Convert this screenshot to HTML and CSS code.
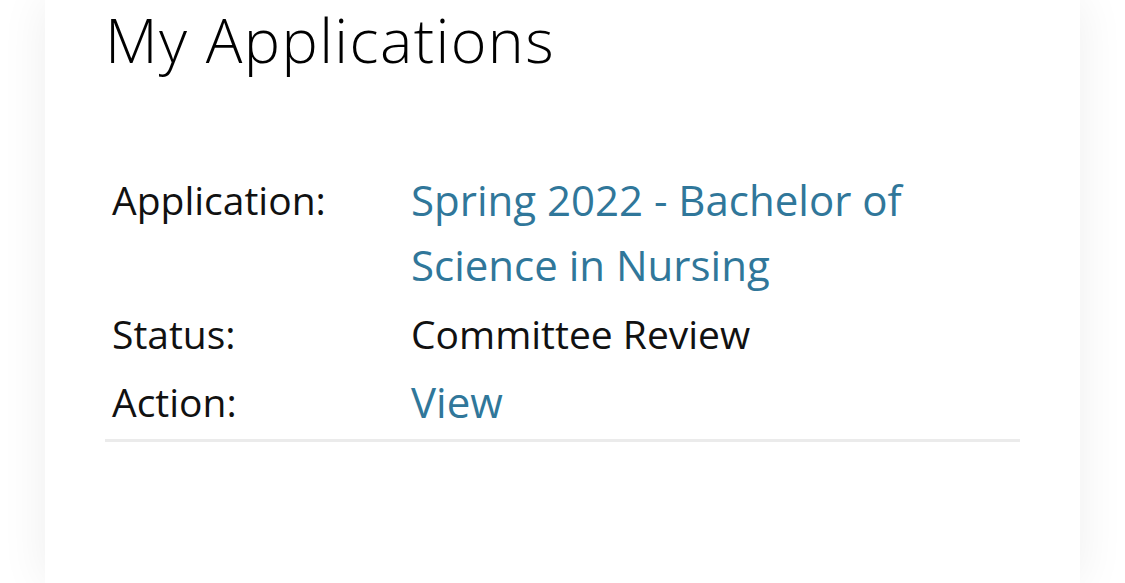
FILE: index.html
```html
<!DOCTYPE html>
<html lang="en">
<head>
  <meta charset="UTF-8">
  <meta name="viewport" content="width=device-width, initial-scale=1">
  <title>My Applications</title>
  <link rel="stylesheet" href="styles.css">
</head>
<body>
  <main class="card">
    <h1>My Applications</h1>
    <table class="apps">
      <tbody>
        <tr>
          <th>Application:</th>
          <td><a href="#">Spring 2022 - Bachelor of Science in Nursing</a></td>
        </tr>
        <tr>
          <th>Status:</th>
          <td>Committee Review</td>
        </tr>
        <tr>
          <th>Action:</th>
          <td><a href="#">View</a></td>
        </tr>
      </tbody>
    </table>
  </main>
</body>
</html>
```

FILE: styles.css
```css
* { box-sizing: border-box; margin: 0; padding: 0; }
html, body { height: 100%; }
body {
  font-family: 'Open Sans', 'Liberation Sans', sans-serif;
  background: #ffffff;
  color: #111;
  overflow: hidden;
}
.card {
  margin: 0 45px;
  min-height: 100%;
  background: #fff;
  box-shadow: 0 0 45px rgba(0,0,0,0.07);
  padding: 4px 60px 0 60px;
}
.card h1 {
  font-size: 61px;
  font-weight: 350;
  line-height: 72px;
  color: #000;
  letter-spacing: 1.4px;
}
.apps {
  width: 915px;
  margin-top: 90px;
  border-collapse: collapse;
  border-bottom: 3px solid #ebebeb;
  font-size: 39px;
}
.apps th, .apps td {
  text-align: left;
  vertical-align: top;
  font-weight: 400;
  line-height: 64px;
  padding: 2px 7px;
}
.apps tr:last-child th, .apps tr:last-child td { padding-bottom: 4px; }
.apps th { width: 299px; }
.apps td { padding-right: 100px; }
.apps a {
  font-size: 42px;
  color: #30779a;
  text-decoration: none;
}
```
